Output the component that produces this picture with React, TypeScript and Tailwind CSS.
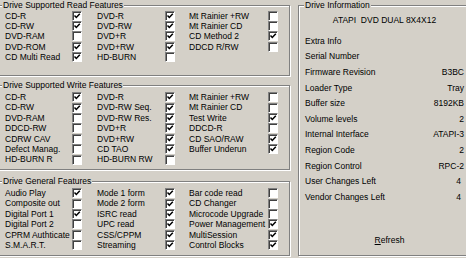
import React from 'react'

type Item = [string, boolean]

const readCols: Item[][] = [
  [['CD-R', true], ['CD-RW', true], ['DVD-RAM', false], ['DVD-ROM', true], ['CD Multi Read', true]],
  [['DVD-R', true], ['DVD-RW', true], ['DVD+R', true], ['DVD+RW', true], ['HD-BURN', false]],
  [['Mt Rainier +RW', false], ['Mt Rainier CD', false], ['CD Method 2', true], ['DDCD R/RW', false]],
]

const writeCols: Item[][] = [
  [['CD-R', true], ['CD-RW', true], ['DVD-RAM', false], ['DDCD-RW', false], ['CDRW CAV', false], ['Defect Manag.', false], ['HD-BURN R', false]],
  [['DVD-R', true], ['DVD-RW Seq.', true], ['DVD-RW Res.', true], ['DVD+R', true], ['DVD+RW', true], ['CD TAO', true], ['HD-BURN RW', false]],
  [['Mt Rainier +RW', false], ['Mt Rainier CD', false], ['Test Write', true], ['DDCD-R', false], ['CD SAO/RAW', true], ['Buffer Underun', true]],
]

const generalCols: Item[][] = [
  [['Audio Play', true], ['Composite out', false], ['Digital Port 1', true], ['Digital Port 2', false], ['CPRM Authticate', false], ['S.M.A.R.T.', false]],
  [['Mode 1 form', true], ['Mode 2 form', true], ['ISRC read', true], ['UPC read', true], ['CSS/CPPM', true], ['Streaming', true]],
  [['Bar code read', false], ['CD Changer', false], ['Microcode Upgrade', false], ['Power Management', true], ['MultiSession', true], ['Control Blocks', true]],
]

const info: [string, string][] = [
  ['Extra Info', ''],
  ['Serial Number', ''],
  ['Firmware Revision', 'B3BC'],
  ['Loader Type', 'Tray'],
  ['Buffer size', '8192KB'],
  ['Volume levels', '2'],
  ['Internal Interface', 'ATAPI-3'],
  ['Region Code', '2'],
  ['Region Control', 'RPC-2'],
  ['User Changes Left', '4'],
  ['Vendor Changes Left', '4'],
]

function Check({ on }: { on: boolean }) {
  return (
    <span className="flex h-[10px] w-[10px] shrink-0 border-t border-l border-r border-b border-t-[#808080] border-l-[#808080] border-r-white border-b-white bg-white shadow-[inset_1px_1px_0_#404040]">
      {on && (
        <svg width="8" height="8" viewBox="0 0 8 8" className="block">
          <path d="M1.5 3.6 L3.3 5.5 L6.8 1.8" fill="none" stroke="#000" strokeWidth="1.5" />
        </svg>
      )}
    </span>
  )
}

function Column({ items, labelClass, className }: { items: Item[]; labelClass: string; className: string }) {
  return (
    <div className={`flex flex-col ${className}`}>
      {items.map(([label, on]) => (
        <div key={label} className="flex h-[10.4px] items-center">
          <span className={`${labelClass} whitespace-nowrap leading-[10.4px]`}>{label}</span>
          <Check on={on} />
        </div>
      ))}
    </div>
  )
}

function FeatureBox({ title, cols, className }: { title: string; cols: Item[][]; className: string }) {
  return (
    <fieldset className={`w-[293px] border border-[#808080] pl-[7px] shadow-[inset_1px_1px_0_#fff,1px_1px_0_#fff] ${className}`}>
      <legend className="ml-[-3px] bg-[#d4d0c8] px-[1px] leading-[10px]">{title}</legend>
      <div className="flex">
        <Column items={cols[0]} labelClass="w-[67px]" className="mr-[15px]" />
        <Column items={cols[1]} labelClass="w-[68px]" className="mr-[14px]" />
        <Column items={cols[2]} labelClass="w-[79px]" className="" />
      </div>
    </fieldset>
  )
}

export default function App() {
  return (
    <div className="flex h-[258px] w-[466px] overflow-hidden bg-[#d4d0c8] font-['Liberation_Sans',Arial,sans-serif] text-[8.5px] text-black">
      <div className="ml-[-3px] flex shrink-0 flex-col">
        <FeatureBox title="Drive Supported Read Features" cols={readCols} className="h-[76px] pt-[0.5px]" />
        <FeatureBox title="Drive Supported Write Features" cols={writeCols} className="mt-[4px] h-[90px] pt-[2px]" />
        <FeatureBox title="Drive General Features" cols={generalCols} className="mt-[6px] h-[80px] pt-[2px]" />
      </div>

      <fieldset className="ml-[8px] h-[256px] w-[175px] shrink-0 border border-[#808080] pl-[6px] pr-[8px] shadow-[inset_1px_1px_0_#fff,1px_1px_0_#fff]">
        <legend className="ml-[-1px] bg-[#d4d0c8] px-[1px] leading-[10px]">Drive Information</legend>
        <div className="mt-[5px] h-[10px] whitespace-pre text-center leading-[10px]">{'ATAPI  DVD DUAL 8X4X12'}</div>
        <div className="mt-[8.2px] flex flex-col">
          {info.map(([label, value], i) => (
            <div key={label} className="flex h-[15.63px] items-center justify-between">
              <span>{label}</span>
              <span className={i >= 9 ? 'pr-[3px]' : ''}>{value}</span>
            </div>
          ))}
        </div>
        <div className="mt-[27.8px] flex h-[15.63px] items-center justify-center pl-[10px]">
          <span>
            <span className="underline">R</span>efresh
          </span>
        </div>
      </fieldset>
    </div>
  )
}
